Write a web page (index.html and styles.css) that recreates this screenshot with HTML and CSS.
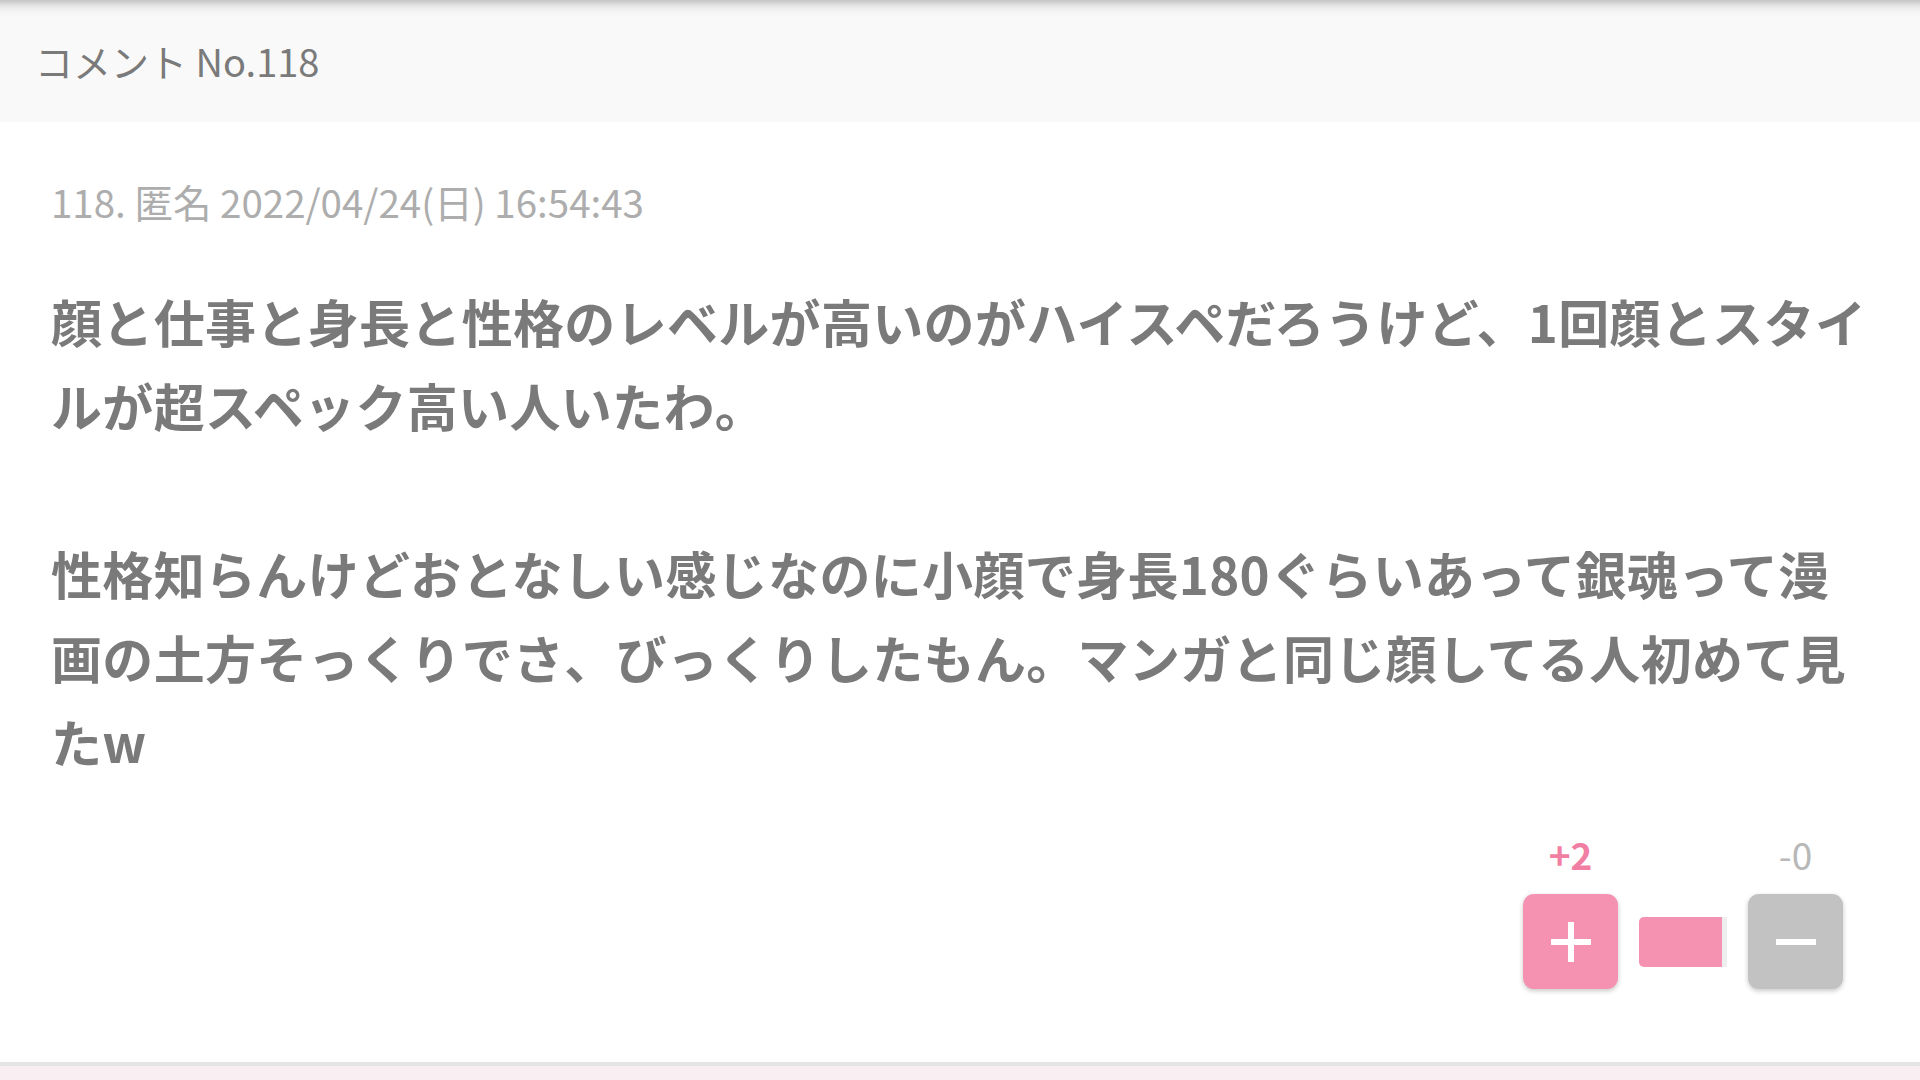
FILE: index.html
```html
<!DOCTYPE html>
<html lang="ja">
<head>
<meta charset="utf-8">
<title>コメント No.118</title>
<link rel="stylesheet" href="styles.css">
</head>
<body>
<header class="head">
  <div class="head-title">コメント No.118</div>
</header>
<main class="card">
  <div class="meta">118. 匿名 2022/04/24(日) 16:54:43</div>
  <div class="body">顔と仕事と身長と性格のレベルが高いのがハイスペだろうけど、1回顔とスタイルが超スペック高い人いたわ。<br><br>性格知らんけどおとなしい感じなのに小顔で身長180ぐらいあって銀魂って漫画の土方そっくりでさ、びっくりしたもん。マンガと同じ顔してる人初めて見たw</div>
  <div class="votes">
    <div class="vote">
      <div class="count count-plus">+2</div>
      <div class="btn btn-plus">
        <svg width="40" height="40" viewBox="0 0 40 40"><rect x="0" y="17" width="40" height="6" fill="#fff"/><rect x="17" y="0" width="6" height="40" fill="#fff"/></svg>
      </div>
    </div>
    <div class="bar"><div class="bar-fill" style="width:94%"></div></div>
    <div class="vote">
      <div class="count count-minus">-0</div>
      <div class="btn btn-minus">
        <svg width="40" height="40" viewBox="0 0 40 40"><rect x="0" y="17" width="40" height="6" fill="#fff"/></svg>
      </div>
    </div>
  </div>
</main>
<div class="foot"></div>
</body>
</html>
```

FILE: styles.css
```css
html, body {
  margin: 0;
  padding: 0;
}
body {
  width: 1920px;
  height: 1080px;
  overflow: hidden;
  background: #f9eef2;
  font-family: "Noto Sans CJK JP", "Noto Sans", sans-serif;
}
.head {
  height: 122px;
  background: linear-gradient(#c4c4c4 0px, #e6e6e6 6px, #f5f5f5 12px, #f9f9f9 18px);
  display: flex;
  align-items: center;
  padding: 0 0 0 35px;
  box-sizing: border-box;
}
.head-title {
  font-size: 38px;
  color: #7a7a7a;
  font-weight: 400;
  line-height: 1;
}
.card {
  background: #fff;
  height: 944px;
  box-sizing: border-box;
  padding: 51px 51px 0 51px;
  border-bottom: 4px solid #e4e4e4;
}
.meta {
  font-size: 38.5px;
  line-height: 56px;
  color: #adadad;
}
.body {
  margin-top: 50px;
  font-size: 51px;
  letter-spacing: 0.33px;
  line-height: 84px;
  font-weight: 700;
  color: #7a7a7a;
  width: 1822px;
}
.votes {
  display: flex;
  justify-content: flex-end;
  align-items: flex-end;
  margin-top: 49px;
  margin-right: 26px;
}
.vote {
  display: flex;
  flex-direction: column;
  align-items: center;
  width: 95px;
}
.count {
  font-size: 37px;
  line-height: 44px;
  margin-bottom: 18px;
}
.count-plus {
  color: #f07fa3;
  font-weight: 700;
}
.count-minus {
  color: #b8b8b8;
}
.btn {
  width: 95px;
  height: 95px;
  border-radius: 11px;
  display: flex;
  align-items: center;
  justify-content: center;
  box-shadow: 0 2px 5px rgba(0, 0, 0, 0.22);
}
.btn-plus {
  background: #f592b1;
}
.btn-minus {
  background: #c2c2c2;
}
.bar {
  width: 88px;
  height: 50px;
  margin: 0 21px 22px 21px;
  background: #eeeeee;
  border-radius: 5px 0 0 5px;
  overflow: hidden;
  display: flex;
}
.bar-fill {
  height: 100%;
  background: #f592b1;
}
.foot {
  height: 10px;
}
```
